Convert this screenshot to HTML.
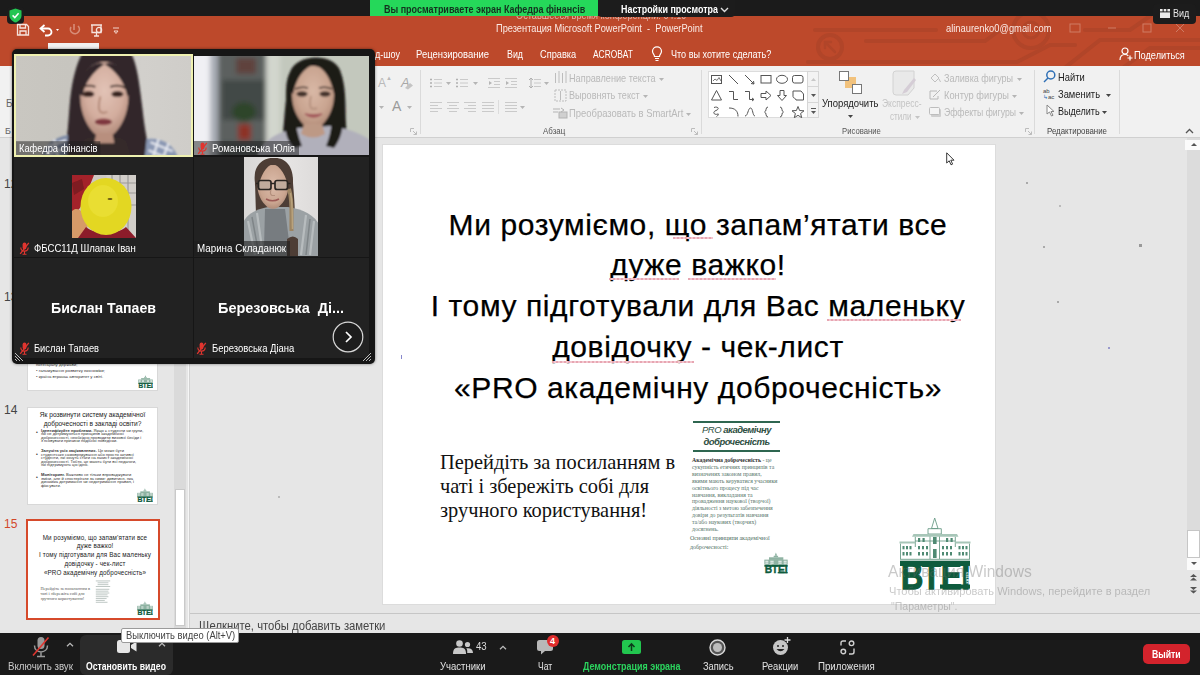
<!DOCTYPE html>
<html lang="ru">
<head>
<meta charset="utf-8">
<title>Zoom</title>
<style>
html,body{margin:0;padding:0;}
body{width:1200px;height:675px;overflow:hidden;position:relative;background:#e6e6e6;font-family:"Liberation Sans",sans-serif;}
.abs{position:absolute;}
.t{position:absolute;white-space:nowrap;line-height:1;}
#topbar{left:0;top:0;width:1200px;height:16px;background:#1b1b1b;}
#orange{left:0;top:16px;width:1200px;height:50px;background:#bd492b;}
#ribbon{left:0;top:66px;width:1200px;height:71px;background:#f1f1f1;border-bottom:1px solid #d0d0d0;}
#work{left:0;top:138px;width:1200px;height:472px;background:#e6e6e6;}
#slide{left:383px;top:145px;width:612px;height:459px;background:#fff;box-shadow:0 0 0 1px #dcdcdc;}
#bottombar{left:0;top:633px;width:1200px;height:42px;background:#1a1a1a;}
#notes{left:0;top:613px;width:1200px;height:20px;background:#e6e6e6;border-top:1px solid #c6c6c6;}
#gallery{left:11.500px;top:48.500px;width:363px;height:315.500px;background:#161616;border-radius:5px;box-shadow:0 0 3px rgba(0,0,0,.5);}
.st{position:absolute;left:9px;width:612px;text-align:center;font-size:30px;letter-spacing:.6px;color:#000;-webkit-text-stroke:.25px #000;white-space:nowrap;line-height:1;}
.sq{position:absolute;height:2px;background:repeating-linear-gradient(90deg,#e7a6b2 0 2px,#f3c6cf 2px 4px);}
</style>
</head>
<body>

<!-- top zoom bar -->
<div id="topbar" class="abs"></div>
<div id="orange" class="abs">
  <svg class="abs" style="left:780px;top:0" width="420" height="50" viewBox="780 16 420 50" fill="none" stroke="#b14529" stroke-width="4" stroke-linecap="round">
    <circle cx="830" cy="47" r="12"/><path d="M835 52 L825 42 M825 48 V42 H831" stroke-width="2.500"/>
    <circle cx="1031" cy="30" r="18"/><circle cx="1031" cy="30" r="8" stroke-width="3"/>
    <path d="M815 30 H936"/><path d="M866 41 H985 L1000 30"/><path d="M808 62 H1017 L1050 45 H1075"/><path d="M1062 70 L1100 40 H1200"/><path d="M1120 70 L1150 48 H1200"/><path d="M1085 30 H1130 L1150 16"/>
  </svg>
</div>
<div class="t" id="t4" style="left:515.5px;top:11px;font-size:10px;color:#e3b3a6;transform-origin:0 50%;transform:scaleX(0.919)">Оставшееся время конференции: 04:19</div>
<div class="abs" style="left:370px;top:0;width:228px;height:16px;background:#25d85a;"></div>
<div class="t" id="t1" style="left:383.8px;top:4px;font-size:10.5px;font-weight:bold;color:#14311f;transform-origin:0 50%;transform:scaleX(0.856)">Вы просматриваете экран Кафедра фінансів</div>
<div class="abs" style="left:598px;top:0;width:137px;height:17px;background:#1c1c1c;border-radius:0 0 4px 4px;"></div>
<div class="t" id="t2" style="left:621.0px;top:4px;font-size:10.5px;font-weight:bold;color:#fff;transform-origin:0 50%;transform:scaleX(0.848)">Настройки просмотра</div>
<svg class="abs" style="left:720px;top:7px" width="9" height="6" viewBox="0 0 9 6"><path d="M1 1 L4.5 4.5 L8 1" fill="none" stroke="#ddd" stroke-width="1.4"/></svg>
<div class="abs" style="left:1153px;top:4px;width:43px;height:20px;background:#1c1c1c;border-radius:4px;"></div>
<svg class="abs" style="left:1160px;top:9px" width="10" height="9" viewBox="0 0 10 9" fill="#e8e8e8"><rect x="0" y="0" width="2.6" height="2.4"/><rect x="3.7" y="0" width="2.6" height="2.4"/><rect x="7.4" y="0" width="2.6" height="2.4"/><rect x="0" y="3.4" width="10" height="5.6"/></svg>
<div class="t" id="t3" style="left:1172.5px;top:8px;font-size:11px;color:#e8e8e8;transform-origin:0 50%;transform:scaleX(0.816)">Вид</div>
<div class="abs" style="left:7px;top:7px;width:17px;height:17px;background:#1c1c1c;border-radius:4px;"></div>
<svg class="abs" style="left:9px;top:8px" width="13" height="15" viewBox="0 0 13 15"><path d="M6.5 .5 L12.5 2.6 V7.5 C12.5 11 9.5 13.6 6.5 14.6 C3.500 13.6 .5 11 .5 7.5 V2.6 Z" fill="#23c552"/><path d="M3.6 7.4 L5.8 9.6 L9.6 5.2" fill="none" stroke="#fff" stroke-width="1.5"/></svg>

<!-- quick access -->
<svg class="abs" style="left:16px;top:23px" width="110" height="14" viewBox="0 0 110 14" fill="none" stroke="#fff" stroke-width="1.3">
  <path d="M1.500 1.500 H10.500 L12.500 3.500 V12 H1.500 Z M4 1.500 V5 H9.500 V1.500 M4 12 V8 H10 V12" stroke="#f6e4de"/>
  <path d="M25 5.500 H32 A3.500 3.500 0 0 1 32 12.500 H29" stroke-width="1.800"/><path d="M28.500 2 L24.500 5.500 L28.500 9" stroke-width="1.800"/>
  <path d="M40 6 h3 l-1.500 2 z" fill="#fff" stroke="none"/>
  <path d="M62 3 A4.500 4.500 0 1 1 55 4 M58 1 V7" stroke="#d78d78" stroke-width="1.600"/>
  <path d="M75 2 H86 M76 2.500 V9.500 H85 V2.500 M80.500 9.500 V12.500 M78 13 H83" stroke="#f6e4de"/><circle cx="83" cy="7" r="2.600" stroke="#f6e4de"/>
  <path d="M97 5 H103 M98 8 h4 l-2 2.500 z" stroke="#f3d5cb" stroke-width="1"/>
</svg>
<div class="abs" style="left:48px;top:43px;width:51px;height:8px;background:#f1f1f1;"></div>

<!-- title -->
<div class="t" id="t5" style="left:496.0px;top:23px;font-size:10.5px;color:#fbeae5;transform-origin:0 50%;transform:scaleX(0.881)">Презентация Microsoft PowerPoint&nbsp; -&nbsp; PowerPoint</div>
<div class="t" id="t6" style="left:945.5px;top:23px;font-size:10.5px;color:#fbeae5;transform-origin:0 50%;transform:scaleX(0.889)">alinaurenko0@gmail.com</div>
<svg class="abs" style="left:1068px;top:22px" width="120" height="12" viewBox="0 0 120 12" fill="none" stroke="#cf7c65" stroke-width="1"><rect x="2" y="2" width="10" height="8"/><path d="M40 6 H48"/><rect x="75" y="2" width="8" height="8"/><path d="M108 2 l8 8 M116 2 l-8 8"/></svg>

<!-- menu -->
<div class="t" id="m0" style="left:374.5px;top:49px;font-size:10.5px;color:#fff;transform-origin:0 50%;transform:scaleX(0.861)">д-шоу</div>
<div class="t" id="m1" style="left:416.0px;top:49px;font-size:10.5px;color:#fff;transform-origin:0 50%;transform:scaleX(0.900)">Рецензирование</div>
<div class="t" id="m2" style="left:507.0px;top:49px;font-size:10.5px;color:#fff;transform-origin:0 50%;transform:scaleX(0.842)">Вид</div>
<div class="t" id="m3" style="left:539.5px;top:49px;font-size:10.5px;color:#fff;transform-origin:0 50%;transform:scaleX(0.880)">Справка</div>
<div class="t" id="m4" style="left:593.0px;top:49px;font-size:10.5px;color:#fff;transform-origin:0 50%;transform:scaleX(0.800)">ACROBAT</div>
<svg class="abs" style="left:651px;top:46px" width="12" height="16" viewBox="0 0 12 16" fill="none" stroke="#fff" stroke-width="1.200"><path d="M3.500 10.500 C3.500 8.500 1.500 7.800 1.500 5.300 A4.500 4.500 0 0 1 10.500 5.300 C10.500 7.800 8.500 8.500 8.500 10.500 Z M4 12.500 H8 M4.500 14.500 H7.500"/></svg>
<div class="t" id="m5" style="left:670.8px;top:49px;font-size:10.5px;color:#fff;transform-origin:0 50%;transform:scaleX(0.864)">Что вы хотите сделать?</div>
<svg class="abs" style="left:1119px;top:47px" width="14" height="14" viewBox="0 0 14 14" fill="none" stroke="#fff" stroke-width="1.200"><circle cx="6" cy="4" r="3"/><path d="M1 13 C1 9 3.500 7.500 6 7.500 C7.500 7.500 8.500 8 9.300 8.800 M11 8.500 V13.500 M8.500 11 H13.500"/></svg>
<div class="t" id="m6" style="left:1133.8px;top:50px;font-size:10.5px;color:#fff;transform-origin:0 50%;transform:scaleX(0.875)">Поделиться</div>
<!-- ribbon -->
<div id="ribbon" class="abs"></div>
<div class="t" style="left:378px;top:77px;font-size:12px;color:#b9b9b9">A</div><div class="t" style="left:386px;top:75px;font-size:6px;color:#b9b9b9">▲</div>
<div class="t" style="left:401px;top:76px;font-size:13px;color:#a8a8a8;font-style:italic">A</div><svg class="abs" style="left:404px;top:82px" width="10" height="8" viewBox="0 0 10 8"><path d="M1 6 L6 1 L9 3.500 L4 7.500 Z" fill="#c4c4c4"/></svg>
<div class="t" style="left:392px;top:99px;font-size:14px;color:#9a9a9a">A</div>
<svg class="abs" style="left:378.5px;top:105.5px" width="5" height="3" viewBox="0 0 5 3"><path d="M0 0 H5 L2.500 3 Z" fill="#b5b5b5"/></svg>
<svg class="abs" style="left:406.5px;top:105.5px" width="5" height="3" viewBox="0 0 5 3"><path d="M0 0 H5 L2.500 3 Z" fill="#b5b5b5"/></svg>
<div class="abs" style="left:420px;top:70px;width:1px;height:64px;background:#dadada"></div>
<svg class="abs" style="left:410px;top:128px" width="7" height="7" viewBox="0 0 7 7" fill="none" stroke="#bcbcbc" stroke-width="1"><path d="M.5 4 V.5 H4 M3 3 L6.500 6.500 M6.500 3.500 V6.500 H3.500"/></svg>
<svg class="abs" style="left:430px;top:78px" width="12" height="10" viewBox="0 0 12 10" stroke="#cacaca" stroke-width="1" fill="none"><path d="M4 1.500 H12 M4 5 H12 M4 8.500 H12"/><path d="M0 1.500 H2 M0 5 H2 M0 8.500 H2" stroke="#b0b0b0" stroke-width="1.600"/></svg>
<svg class="abs" style="left:445.5px;top:81.5px" width="5" height="3" viewBox="0 0 5 3"><path d="M0 0 H5 L2.500 3 Z" fill="#b5b5b5"/></svg>
<svg class="abs" style="left:456px;top:78px" width="12" height="10" viewBox="0 0 12 10" stroke="#cacaca" stroke-width="1" fill="none"><path d="M4 1.500 H12 M4 5 H12 M4 8.500 H12"/><path d="M0 1.500 H2 M0 5 H2 M0 8.500 H2" stroke="#b0b0b0" stroke-width="1.600"/></svg>
<svg class="abs" style="left:472.5px;top:81.5px" width="5" height="3" viewBox="0 0 5 3"><path d="M0 0 H5 L2.500 3 Z" fill="#b5b5b5"/></svg>
<svg class="abs" style="left:488px;top:78px" width="12" height="10" viewBox="0 0 12 10" stroke="#cacaca" stroke-width="1" fill="none"><path d="M0 .5 H12 M6 3.500 H12 M6 6.500 H12 M0 9.500 H12"/><path d="M4 5 L1 3 V7 Z" fill="#b5b5b5" stroke="none"/></svg>
<svg class="abs" style="left:505px;top:78px" width="12" height="10" viewBox="0 0 12 10" stroke="#cacaca" stroke-width="1" fill="none"><path d="M0 .5 H12 M6 3.500 H12 M6 6.500 H12 M0 9.500 H12"/><path d="M4 5 L1 3 V7 Z" fill="#b5b5b5" stroke="none"/></svg>
<svg class="abs" style="left:529px;top:78px" width="12" height="10" viewBox="0 0 12 10" stroke="#cacaca" stroke-width="1" fill="none"><path d="M5 1.500 H12 M5 5 H12 M5 8.500 H12"/><path d="M2 0 V10 M0 2 L2 0 L4 2 M0 8 L2 10 L4 8" stroke="#b0b0b0"/></svg>
<svg class="abs" style="left:543.5px;top:81.5px" width="5" height="3" viewBox="0 0 5 3"><path d="M0 0 H5 L2.500 3 Z" fill="#b5b5b5"/></svg>
<svg class="abs" style="left:430px;top:102px" width="12" height="10" viewBox="0 0 12 10" stroke="#cacaca" stroke-width="1" fill="none"><path d="M0 .5 H12 M0 3.500 H8 M0 6.500 H12 M0 9.500 H8"/></svg>
<svg class="abs" style="left:447px;top:102px" width="12" height="10" viewBox="0 0 12 10" stroke="#cacaca" stroke-width="1" fill="none"><path d="M0 .5 H12 M2 3.500 H10 M0 6.500 H12 M2 9.500 H10"/></svg>
<svg class="abs" style="left:464px;top:102px" width="12" height="10" viewBox="0 0 12 10" stroke="#cacaca" stroke-width="1" fill="none"><path d="M0 .5 H12 M4 3.500 H12 M0 6.500 H12 M4 9.500 H12"/></svg>
<svg class="abs" style="left:482px;top:102px" width="12" height="10" viewBox="0 0 12 10" stroke="#cacaca" stroke-width="1" fill="none"><path d="M0 .5 H12 M0 3.500 H12 M0 6.500 H12 M0 9.500 H12"/></svg>
<div class="abs" style="left:498px;top:100px;width:1px;height:14px;background:#dcdcdc"></div>
<svg class="abs" style="left:505px;top:102px" width="12" height="10" viewBox="0 0 12 10" stroke="#cacaca" stroke-width="1" fill="none"><path d="M0 .5 H12 M0 3.500 H12 M0 6.500 H12 M0 9.500 H12"/></svg>
<svg class="abs" style="left:519.5px;top:105.5px" width="5" height="3" viewBox="0 0 5 3"><path d="M0 0 H5 L2.500 3 Z" fill="#b5b5b5"/></svg>
<svg class="abs" style="left:554px;top:71px" width="13" height="13" viewBox="0 0 13 13" fill="none" stroke="#bdbdbd" stroke-width="1"><path d="M1.500 2 V12 M5 0 V12 M8.500 2 V12 M12 0 V12"/></svg>
<svg class="abs" style="left:554px;top:89px" width="13" height="13" viewBox="0 0 13 13" fill="none" stroke="#bdbdbd" stroke-width="1" stroke-dasharray="2 1"><rect x="1" y="1" width="11" height="11"/><path d="M6.500 2 V11" stroke-dasharray="none"/></svg>
<svg class="abs" style="left:553px;top:107px" width="15" height="12" viewBox="0 0 15 12" fill="none" stroke="#b3b3b3" stroke-width="1"><path d="M0 2 H7 M0 5 H5"/><rect x="6" y="5" width="8" height="6" fill="#d0d0d0"/><path d="M8 1 L11 3 L8 5" /></svg>
<div class="t" id="r1" style="left:569.0px;top:73px;font-size:10.5px;color:#b9b9b9;transform-origin:0 50%;transform:scaleX(0.871)">Направление текста</div><svg class="abs" style="left:658.5px;top:77.5px" width="5" height="3" viewBox="0 0 5 3"><path d="M0 0 H5 L2.500 3 Z" fill="#b5b5b5"/></svg>
<div class="t" id="r2" style="left:569.0px;top:90px;font-size:10.5px;color:#b9b9b9;transform-origin:0 50%;transform:scaleX(0.864)">Выровнять текст</div><svg class="abs" style="left:642.5px;top:94.5px" width="5" height="3" viewBox="0 0 5 3"><path d="M0 0 H5 L2.500 3 Z" fill="#b5b5b5"/></svg>
<div class="t" id="r3" style="left:569.0px;top:108px;font-size:10.5px;color:#b9b9b9;transform-origin:0 50%;transform:scaleX(0.898)">Преобразовать в SmartArt</div><svg class="abs" style="left:685.5px;top:112.5px" width="5" height="3" viewBox="0 0 5 3"><path d="M0 0 H5 L2.500 3 Z" fill="#b5b5b5"/></svg>
<div class="t" id="r4" style="left:542.6px;top:126px;font-size:9.500px;color:#555;transform-origin:0 50%;transform:scaleX(0.833)">Абзац</div>
<svg class="abs" style="left:691px;top:128px" width="7" height="7" viewBox="0 0 7 7" fill="none" stroke="#bcbcbc" stroke-width="1"><path d="M.5 4 V.5 H4 M3 3 L6.500 6.500 M6.500 3.500 V6.500 H3.500"/></svg>
<div class="abs" style="left:701px;top:70px;width:1px;height:64px;background:#dadada"></div>
<div class="abs" style="left:708px;top:71px;width:111px;height:47px;background:#fff;border:1px solid #dcdcdc;box-sizing:border-box"></div>
<div class="abs" style="left:807px;top:71px;width:12px;height:47px;background:#f3f3f3;border:1px solid #d6d6d6;box-sizing:border-box"></div><div class="abs" style="left:807px;top:86px;width:12px;height:1px;background:#d6d6d6"></div><div class="abs" style="left:807px;top:102px;width:12px;height:1px;background:#d6d6d6"></div>
<svg class="abs" style="left:810.5px;top:77.5px" width="5" height="3" viewBox="0 0 5 3"><path d="M0 3 H5 L2.500 0 Z" fill="#c8c8c8"/></svg>
<svg class="abs" style="left:810.5px;top:93.5px" width="5" height="3" viewBox="0 0 5 3"><path d="M0 0 H5 L2.500 3 Z" fill="#555"/></svg>
<svg class="abs" style="left:810.5px;top:110.5px" width="5" height="3" viewBox="0 0 5 3"><path d="M0 0 H5 L2.500 3 Z" fill="#555"/></svg>
<div class="abs" style="left:811px;top:108px;width:5px;height:1px;background:#555"></div>
<svg class="abs" style="left:708px;top:71px" width="100" height="47" viewBox="708 71 100 47" fill="none" stroke="#555" stroke-width="1"><rect x="711.500" y="75.500" width="10" height="8"/><path d="M713 81 l2-2 l2 1.500 l2-3 l2 3.500" stroke-width=".8"/><path d="M729 75 L738 84"/><path d="M745 75 L754 84 M754 84 l-3-.5 M754 84 l-.5-3"/><rect x="761" y="75.500" width="10" height="7.500"/><ellipse cx="782" cy="79.300" rx="5.500" ry="4"/><rect x="792.500" y="75.500" width="10.500" height="7.500" rx="2"/><path d="M716.500 90.500 L721.500 100 H711.500 Z"/><path d="M729 91.500 H733.500 V99.500 H738"/><path d="M745 91.500 H749.500 V99.500 H754 M754 99.500 l-2-1.500 M754 99.500 l-2 1.500"/><path d="M761 93.500 H766 V91 L771 95.500 L766 100 V97.500 H761 Z"/><path d="M780 90.500 H784 V95.500 H786.500 L782 100.500 L777.500 95.500 H780 Z"/><path d="M793 91 H801 L803.500 94 V100 H796 C796 98 793 98.500 793 96.500 Z"/><path d="M714 107.500 C718 106 720 109 716 110.500 C712 112 714 115.500 718 114 C719 113.500 718 116 716.500 116.500"/><path d="M729 108 C735 108 738 111 738 116.500"/><path d="M745 116 C748 116 748 108 750.500 108 C753 108 752.500 116 755 116"/><path d="M768 107 C765 107 767 111.500 764.500 112 C767 112.500 765 117 768 117"/><path d="M780 107 C783 107 781 111.500 783.500 112 C781 112.500 783 117 780 117"/><path d="M798 106.500 L799.600 110.500 L804 110.800 L800.600 113.500 L801.700 117.700 L798 115.300 L794.300 117.700 L795.400 113.500 L792 110.800 L796.400 110.500 Z"/></svg>
<svg class="abs" style="left:839px;top:71px" width="24" height="24" viewBox="0 0 24 24"><rect x="6" y="6" width="11" height="11" fill="#f2c27c"/><rect x=".5" y=".5" width="9" height="9" fill="#fff" stroke="#777"/><rect x="13.500" y="13.500" width="9" height="9" fill="#fff" stroke="#777"/></svg>
<div class="t" id="r5" style="left:822.0px;top:98px;font-size:10.5px;color:#222;transform-origin:0 50%;transform:scaleX(0.903)">Упорядочить</div><svg class="abs" style="left:847.5px;top:114.5px" width="5" height="3" viewBox="0 0 5 3"><path d="M0 0 H5 L2.500 3 Z" fill="#444"/></svg>
<svg class="abs" style="left:892px;top:70px" width="26" height="26" viewBox="0 0 26 26"><path d="M4 1 H22 V18 L16 25 H4 Q1 25 1 22 V4 Q1 1 4 1 Z" fill="#e9e9e9" stroke="#d2d2d2"/><path d="M22 8 L12 20 L10 24 L15 22 L24 10 Z" fill="#d5cdd6"/></svg>
<div class="t" id="r6" style="left:882.0px;top:98px;font-size:10.5px;color:#c4c4c4;transform-origin:0 50%;transform:scaleX(0.810)">Экспресс-</div><div class="t" id="r7" style="left:889.5px;top:111px;font-size:10.5px;color:#c4c4c4;transform-origin:0 50%;transform:scaleX(0.770)">стили</div><svg class="abs" style="left:914.5px;top:115.5px" width="5" height="3" viewBox="0 0 5 3"><path d="M0 0 H5 L2.500 3 Z" fill="#c4c4c4"/></svg>
<svg class="abs" style="left:929px;top:72px" width="12" height="12" viewBox="0 0 12 12" fill="none" stroke="#c0c0c0"><path d="M2 6 L6 2 L10 6 L6 10 Z M10 7 l1.500 3"/></svg><svg class="abs" style="left:929px;top:89px" width="12" height="12" viewBox="0 0 12 12" fill="none" stroke="#b8b8b8"><path d="M1 2 H8 M1 2 V10 H9 V7 M4 8 L11 1"/></svg><svg class="abs" style="left:929px;top:106px" width="13" height="12" viewBox="0 0 13 12"><rect x="2" y="3" width="10" height="8" rx="1" fill="#cfcfcf"/><rect x=".5" y="1.500" width="10" height="7" rx="1" fill="#f4f4f4" stroke="#bdbdbd"/></svg>
<div class="t" id="r8" style="left:944.3px;top:73px;font-size:10.5px;color:#b9b9b9;transform-origin:0 50%;transform:scaleX(0.862)">Заливка фигуры</div><svg class="abs" style="left:1016.5px;top:77.5px" width="5" height="3" viewBox="0 0 5 3"><path d="M0 0 H5 L2.500 3 Z" fill="#b5b5b5"/></svg>
<div class="t" id="r9" style="left:944.0px;top:90px;font-size:10.5px;color:#b9b9b9;transform-origin:0 50%;transform:scaleX(0.885)">Контур фигуры</div><svg class="abs" style="left:1011.5px;top:94.5px" width="5" height="3" viewBox="0 0 5 3"><path d="M0 0 H5 L2.500 3 Z" fill="#b5b5b5"/></svg>
<div class="t" id="r10" style="left:944.0px;top:107px;font-size:10.5px;color:#b9b9b9;transform-origin:0 50%;transform:scaleX(0.823)">Эффекты фигуры</div><svg class="abs" style="left:1018.5px;top:111.5px" width="5" height="3" viewBox="0 0 5 3"><path d="M0 0 H5 L2.500 3 Z" fill="#b5b5b5"/></svg>
<div class="t" id="r11" style="left:842.0px;top:126px;font-size:9.500px;color:#555;transform-origin:0 50%;transform:scaleX(0.811)">Рисование</div>
<svg class="abs" style="left:1025px;top:128px" width="7" height="7" viewBox="0 0 7 7" fill="none" stroke="#bcbcbc" stroke-width="1"><path d="M.5 4 V.5 H4 M3 3 L6.500 6.500 M6.500 3.500 V6.500 H3.500"/></svg>
<div class="abs" style="left:1034px;top:70px;width:1px;height:64px;background:#dadada"></div>
<svg class="abs" style="left:1043px;top:70px" width="13" height="13" viewBox="0 0 13 13" fill="none" stroke="#2e6fb5" stroke-width="1.500"><circle cx="7.800" cy="5" r="4"/><path d="M5 8 L1 12"/></svg>
<div class="t" id="r12" style="left:1058.0px;top:72px;font-size:11px;color:#222;transform-origin:0 50%;transform:scaleX(0.851)">Найти</div>
<div class="t" style="left:1043px;top:88px;font-size:6px;color:#444;line-height:6px">ab<br><span style="color:#2e6fb5">↳</span>ac</div>
<div class="t" id="r13" style="left:1058.0px;top:89px;font-size:11px;color:#222;transform-origin:0 50%;transform:scaleX(0.850)">Заменить</div><svg class="abs" style="left:1105.5px;top:93.5px" width="5" height="3" viewBox="0 0 5 3"><path d="M0 0 H5 L2.500 3 Z" fill="#444"/></svg>
<svg class="abs" style="left:1046px;top:104px" width="9" height="13" viewBox="0 0 9 13" fill="#fff" stroke="#888" stroke-width="1"><path d="M1 1 V10 L3.500 8 L5.500 12 L7 11.300 L5 7.500 H8 Z"/></svg>
<div class="t" id="r14" style="left:1058.0px;top:106px;font-size:11px;color:#222;transform-origin:0 50%;transform:scaleX(0.822)">Выделить</div><svg class="abs" style="left:1101.5px;top:110.5px" width="5" height="3" viewBox="0 0 5 3"><path d="M0 0 H5 L2.500 3 Z" fill="#444"/></svg>
<div class="t" id="r15" style="left:1046.7px;top:126px;font-size:9.500px;color:#444;transform-origin:0 50%;transform:scaleX(0.829)">Редактирование</div>
<div class="abs" style="left:1119px;top:70px;width:1px;height:64px;background:#dadada"></div>
<svg class="abs" style="left:1185px;top:128px" width="9" height="6" viewBox="0 0 9 6"><path d="M1 5 L4.500 1.500 L8 5" fill="none" stroke="#555" stroke-width="1.300"/></svg>
<div id="work" class="abs"></div>
<div id="notes" class="abs"></div>
<div class="t" style="left:6px;top:99px;font-size:10px;color:#666">Б</div><div class="t" style="left:5px;top:127px;font-size:9px;color:#666">Б</div>
<!-- left thumbnails panel -->
<div class="abs" style="left:0;top:138px;width:189px;height:495px;background:#e6e6e6"></div>
<div class="abs" style="left:174px;top:138px;width:12px;height:495px;background:#dadada"></div>
<div class="abs" style="left:175px;top:489px;width:10px;height:137px;background:#fff;border:1px solid #c9c9c9;box-sizing:border-box"></div>
<div class="abs" style="left:188px;top:138px;width:1px;height:495px;background:#f6f6f6"></div>
<div class="abs" style="left:189px;top:138px;width:1px;height:495px;background:#d2d2d2"></div>
<div class="t" style="left:4px;top:178px;font-size:12px;color:#444">12</div>
<div class="t" style="left:4px;top:291px;font-size:12px;color:#444">13</div>
<!-- thumb 13 (partly hidden) -->
<div class="abs" style="left:27px;top:300px;width:131px;height:91px;background:#fff;border:1px solid #d8d8d8;box-sizing:border-box"></div>
<div class="t" style="left:36px;top:362px;font-size:4.300px;color:#333;line-height:6px">потенціалу держави;<br>• гальмування розвитку економіки;<br>• країна втрачає авторитет у світі.</div>
<svg class="abs" style="left:138px;top:375px" width="15" height="13" viewBox="899 516 72 75" preserveAspectRatio="none"><g fill="#8fb3a3"><path d="M934.700 518 L931 529 H938.500 Z"/><rect x="928" y="529" width="13.300" height="5"/><rect x="914" y="534" width="43" height="9"/><rect x="900" y="542" width="70" height="17.500"/></g><g fill="#fff"><rect x="903" y="546" width="9" height="3"/><rect x="918" y="546" width="10" height="3"/><rect x="942" y="546" width="10" height="3"/><rect x="958" y="546" width="9" height="3"/><rect x="903" y="552" width="9" height="3.500"/><rect x="918" y="552" width="10" height="3.500"/><rect x="942" y="552" width="10" height="3.500"/><rect x="958" y="552" width="9" height="3.500"/></g><rect x="900" y="560.700" width="70" height="5.300" fill="#0e5b3d"/><rect x="940" y="584.500" width="30" height="4.200" fill="#0e5b3d"/><text x="901" y="588.700" font-family="Liberation Sans, sans-serif" font-weight="bold" font-size="39" textLength="69" lengthAdjust="spacingAndGlyphs" fill="#0e5b3d" stroke="#0e5b3d" stroke-width="1.300">ВТЕІ</text></svg>
<!-- thumb 14 -->
<div class="t" id="n14" style="left:4px;top:404px;font-size:12px;color:#444">14</div>
<div class="abs" style="left:27px;top:407px;width:131px;height:98px;background:#fff;border:1px solid #d8d8d8;box-sizing:border-box"></div>
<div class="abs" style="left:27px;top:411px;width:131px;text-align:center;font-size:6.600px;line-height:8.600px;color:#222;white-space:nowrap">Як розвинути систему академічної<br>доброчесності в закладі освіти?</div>
<div class="abs" style="left:41px;top:429px;width:112px;font-size:4.100px;line-height:3.400px;color:#333;white-space:nowrap"><b>Ідентифікуйте проблеми.</b> Якщо є студенти чи групи,<br>які не дотримуються принципів академічної<br>доброчесності, необхідно проводити виховні бесіди і<br>з’ясовувати причини подібної поведінки.<br><br><br><b>Залучіть усіх зацікавлених.</b> Це може бути<br>студентське самоврядування або просто активні<br>студенти, які хочуть стати на захист академічної<br>доброчесності. Тобто, це мають бути всі педагоги,<br>які підтримують цю ідею.<br><br><br><b>Моніторинг.</b> Важливо не тільки впроваджувати<br>зміни, але й спостерігати за ними: дивитися, яка<br>динаміка дотримання чи недотримання правил, і<br>фіксувати.</div>
<div class="t" style="left:36px;top:421px;font-size:5px;color:#333;line-height:22.300px">•<br>•<br>•</div>
<svg class="abs" style="left:137px;top:488px" width="16" height="14" viewBox="899 516 72 75" preserveAspectRatio="none"><g fill="#8fb3a3"><path d="M934.700 518 L931 529 H938.500 Z"/><rect x="928" y="529" width="13.300" height="5"/><rect x="914" y="534" width="43" height="9"/><rect x="900" y="542" width="70" height="17.500"/></g><g fill="#fff"><rect x="903" y="546" width="9" height="3"/><rect x="918" y="546" width="10" height="3"/><rect x="942" y="546" width="10" height="3"/><rect x="958" y="546" width="9" height="3"/><rect x="903" y="552" width="9" height="3.500"/><rect x="918" y="552" width="10" height="3.500"/><rect x="942" y="552" width="10" height="3.500"/><rect x="958" y="552" width="9" height="3.500"/></g><rect x="900" y="560.700" width="70" height="5.300" fill="#0e5b3d"/><rect x="940" y="584.500" width="30" height="4.200" fill="#0e5b3d"/><text x="901" y="588.700" font-family="Liberation Sans, sans-serif" font-weight="bold" font-size="39" textLength="69" lengthAdjust="spacingAndGlyphs" fill="#0e5b3d" stroke="#0e5b3d" stroke-width="1.300">ВТЕІ</text></svg>
<!-- thumb 15 selected -->
<div class="t" id="n15" style="left:4px;top:518px;font-size:12px;color:#d2472a">15</div>
<div class="abs" style="left:26px;top:519px;width:134px;height:101px;background:#fff;border:2px solid #d64a2b;box-sizing:border-box"></div>
<div class="abs" style="left:30px;top:533.500px;width:130px;text-align:center;font-size:6.300px;letter-spacing:.12px;line-height:8.750px;color:#222;white-space:nowrap">Ми розуміємо, що запам’ятати все<br>дуже важко!<br>І тому підготували для Вас маленьку<br>довідочку - чек-лист<br>«PRO академічну доброчесність»</div>
<div class="abs" style="left:40.500px;top:585.500px;font-family:'Liberation Serif',serif;font-size:4.300px;line-height:5.100px;color:#555;white-space:nowrap">Перейдіть за посиланням в<br>чаті і збережіть собі для<br>зручного користування!</div>
<svg class="abs" style="left:94px;top:580px" width="18" height="26" viewBox="0 0 20 28" preserveAspectRatio="none" stroke="#8a9a94" stroke-width=".6" fill="none"><path d="M2 1 H18 M4 3 H16 M4 5 H16 M2 7 H18 M2 10 H17 M2 12 H16 M2 14 H17 M2 16 H15 M2 18 H16 M2 20 H14 M2 22 H12 M2 24 H15"/></svg>
<svg class="abs" style="left:137px;top:601px" width="16" height="14" viewBox="899 516 72 75" preserveAspectRatio="none"><g fill="#8fb3a3"><path d="M934.700 518 L931 529 H938.500 Z"/><rect x="928" y="529" width="13.300" height="5"/><rect x="914" y="534" width="43" height="9"/><rect x="900" y="542" width="70" height="17.500"/></g><g fill="#fff"><rect x="903" y="546" width="9" height="3"/><rect x="918" y="546" width="10" height="3"/><rect x="942" y="546" width="10" height="3"/><rect x="958" y="546" width="9" height="3"/><rect x="903" y="552" width="9" height="3.500"/><rect x="918" y="552" width="10" height="3.500"/><rect x="942" y="552" width="10" height="3.500"/><rect x="958" y="552" width="9" height="3.500"/></g><rect x="900" y="560.700" width="70" height="5.300" fill="#0e5b3d"/><rect x="940" y="584.500" width="30" height="4.200" fill="#0e5b3d"/><text x="901" y="588.700" font-family="Liberation Sans, sans-serif" font-weight="bold" font-size="39" textLength="69" lengthAdjust="spacingAndGlyphs" fill="#0e5b3d" stroke="#0e5b3d" stroke-width="1.300">ВТЕІ</text></svg>
<div id="slide" class="abs">
  <div class="st" style="top:64.500px">Ми розуміємо, що запам’ятати все</div>
  <div class="st" style="top:105.300px">дуже важко!</div>
  <div class="st" style="top:146.200px">І тому підготували для Вас маленьку</div>
  <div class="st" style="top:187px">довідочку - чек-лист</div>
  <div class="st" style="top:227.800px">«PRO академічну доброчесність»</div>
  <div class="abs" style="left:57px;top:306px;font-family:'Liberation Serif',serif;font-size:20.400px;line-height:23.900px;color:#111;white-space:nowrap" id="sv">Перейдіть за посиланням в<br>чаті і збережіть собі для<br>зручного користування!</div>
  <!-- doc image -->
  <div class="abs" style="left:310px;top:276px;width:87px;height:1.500px;background:#2e6650"></div>
  <div class="abs" style="left:310px;top:305px;width:87px;height:1.500px;background:#2e6650"></div>
  <div class="abs" style="left:310px;top:279px;width:87px;text-align:center;font-size:9.500px;line-height:12px;font-style:italic;font-weight:bold;color:#2f4f43;white-space:nowrap;letter-spacing:-.5px"><span style="font-weight:normal">PRO</span> академічну<br>доброчесність</div>
  <div class="abs" style="left:309px;top:312px;font-family:'Liberation Serif',serif;font-size:5.800px;line-height:6.900px;color:#56756a;white-space:nowrap"><b style="color:#333">Академічна доброчесність</b> - це<br>сукупність етичних принципів та<br>визначених законом правил,<br>якими мають керуватися учасники<br>освітнього процесу під час<br>навчання, викладання та<br>провадження наукової (творчої)<br>діяльності з метою забезпечення<br>довіри до результатів навчання<br>та/або наукових (творчих)<br>досягнень.</div>
  <div class="abs" style="left:307px;top:389px;font-family:'Liberation Serif',serif;font-size:6px;line-height:8.500px;color:#4f6f62;white-space:nowrap">Основні принципи академічної<br>доброчесності:</div>
  <svg class="abs" style="left:381px;top:407px" width="24" height="22" viewBox="899 516 72 75" preserveAspectRatio="none"><g fill="#8fb3a3"><path d="M934.700 518 L931 529 H938.500 Z"/><rect x="928" y="529" width="13.300" height="5"/><rect x="914" y="534" width="43" height="9"/><rect x="900" y="542" width="70" height="17.500"/></g><g fill="#fff"><rect x="903" y="546" width="9" height="3"/><rect x="918" y="546" width="10" height="3"/><rect x="942" y="546" width="10" height="3"/><rect x="958" y="546" width="9" height="3"/><rect x="903" y="552" width="9" height="3.500"/><rect x="918" y="552" width="10" height="3.500"/><rect x="942" y="552" width="10" height="3.500"/><rect x="958" y="552" width="9" height="3.500"/></g><rect x="900" y="560.700" width="70" height="5.300" fill="#0e5b3d"/><rect x="940" y="584.500" width="30" height="4.200" fill="#0e5b3d"/><text x="901" y="588.700" font-family="Liberation Sans, sans-serif" font-weight="bold" font-size="39" textLength="69" lengthAdjust="spacingAndGlyphs" fill="#0e5b3d" stroke="#0e5b3d" stroke-width="1.300">ВТЕІ</text></svg>
  <svg class="abs" style="left:516px;top:371px" width="72" height="75" viewBox="899 516 72 75"><g fill="none" stroke="#6b9c88" stroke-width=".9"><path d="M934.700 518 L931.500 528.500 H938 Z"/><path d="M928 528.700 H941.300 V534 H928 Z"/><path d="M915.300 536.700 V547 M955.300 536.700 V547 M900.500 543.500 V559 M969.500 543.500 V559 M900 559.300 H970 M915 541 H955"/><path d="M930 534 V559 M939.500 534 V559"/></g><path d="M913.500 534 H957 L958.500 536.800 H912 Z" fill="#a7c6b8"/><path d="M899.500 541.500 H915.300 V543.500 H899.500 Z M955.300 541.500 H970.500 V543.500 H955.300 Z" fill="#a7c6b8"/><g fill="#4f8a73"><rect x="933" y="537" width="3.600" height="7"/><rect x="933" y="549" width="3.600" height="9"/><rect x="918" y="538" width="2.200" height="4"/><rect x="922.5" y="538" width="2.200" height="4"/><rect x="946" y="538" width="2.200" height="4"/><rect x="950.5" y="538" width="2.200" height="4"/><rect x="902.5" y="546" width="2" height="3.3"/><rect x="906" y="546" width="2" height="3.3"/><rect x="909.5" y="546" width="2" height="3.3"/><rect x="918" y="546" width="2" height="3.3"/><rect x="922" y="546" width="2" height="3.3"/><rect x="926" y="546" width="2" height="3.3"/><rect x="942" y="546" width="2" height="3.3"/><rect x="946" y="546" width="2" height="3.3"/><rect x="950" y="546" width="2" height="3.3"/><rect x="958.5" y="546" width="2" height="3.3"/><rect x="962" y="546" width="2" height="3.3"/><rect x="965.5" y="546" width="2" height="3.3"/><rect x="902.5" y="552" width="2" height="3.5"/><rect x="906" y="552" width="2" height="3.5"/><rect x="909.5" y="552" width="2" height="3.5"/><rect x="918" y="552" width="2" height="3.5"/><rect x="922" y="552" width="2" height="3.5"/><rect x="926" y="552" width="2" height="3.5"/><rect x="942" y="552" width="2" height="3.5"/><rect x="946" y="552" width="2" height="3.5"/><rect x="950" y="552" width="2" height="3.5"/><rect x="958.5" y="552" width="2" height="3.5"/><rect x="962" y="552" width="2" height="3.5"/><rect x="965.5" y="552" width="2" height="3.5"/></g><rect x="900" y="560.700" width="70" height="5.300" fill="#0e5b3d"/><rect x="940" y="584.500" width="30" height="4.200" fill="#0e5b3d"/><text x="901" y="588.700" font-family="Liberation Sans, sans-serif" font-weight="bold" font-size="39" textLength="69" lengthAdjust="spacingAndGlyphs" fill="#0e5b3d" stroke="#0e5b3d" stroke-width="1.300">ВТЕІ</text><text x="968.800" y="583.500" font-family="Liberation Sans, sans-serif" font-size="3.600" font-weight="bold" fill="#fff" transform="rotate(-90 968.800 583.500)">КНТЕУ</text></svg>
  <!-- spell squiggles -->
  <div class="sq" style="left:290px;top:92px;width:40px"></div>
  <div class="sq" style="left:226px;top:133px;width:70px"></div>
  <div class="sq" style="left:305px;top:133px;width:88px"></div>
  <div class="sq" style="left:444px;top:174px;width:134px"></div>
  <div class="sq" style="left:169px;top:216px;width:142px"></div>
</div>
<!-- gallery -->
<!-- right scrollbar -->
<div class="abs" style="left:1187px;top:138px;width:13px;height:475px;background:#dcdcdc"></div>
<div class="abs" style="left:1185px;top:140px;width:15px;height:10px;background:#fbfbfb"></div>
<svg class="abs" style="left:1191px;top:143px" width="6" height="3" viewBox="0 0 6 3"><path d="M0 3 H6 L3 0 Z" fill="#555"/></svg>
<div class="abs" style="left:1187px;top:530px;width:13px;height:28px;background:#fff;border:1px solid #c6c6c6;box-sizing:border-box"></div>
<div class="abs" style="left:1187px;top:558px;width:13px;height:12px;background:#fbfbfb"></div>
<svg class="abs" style="left:1191px;top:562px" width="6" height="3" viewBox="0 0 6 3"><path d="M0 0 H6 L3 3 Z" fill="#555"/></svg>
<div class="abs" style="left:1187px;top:570px;width:13px;height:43px;background:#e6e6e6"></div>
<svg class="abs" style="left:1190px;top:574px" width="7" height="20" viewBox="0 0 7 20" fill="#555"><path d="M0 3 H7 L3.500 0 Z M0 6.500 H7 L3.500 3.500 Z M0 13 H7 L3.500 16 Z M0 16.500 H7 L3.500 19.500 Z"/></svg>
<!-- notes -->
<div class="t" id="nt" style="left:199.3px;top:620px;font-size:12.500px;color:#444;transform-origin:0 50%;transform:scaleX(0.903)">Щелкните, чтобы добавить заметки</div>
<!-- watermark -->
<div class="t" id="w1" style="left:888.0px;top:564px;font-size:16px;color:rgba(105,105,105,.36);transform-origin:0 50%;transform:scaleX(0.975)">Активация Windows</div>
<div class="t" id="w2" style="left:889.3px;top:586px;font-size:11px;color:rgba(105,105,105,.36);transform-origin:0 50%;transform:scaleX(1.006)">Чтобы активировать Windows, перейдите в раздел</div>
<div class="t" id="w3" style="left:890.5px;top:601px;font-size:11px;color:rgba(105,105,105,.36);transform-origin:0 50%;transform:scaleX(0.957)">"Параметры".</div>
<!-- stray dots -->
<div class="abs" style="left:1026px;top:182px;width:2px;height:2px;background:#aaa"></div><div class="abs" style="left:1059px;top:205px;width:2px;height:2px;background:#bbb"></div><div class="abs" style="left:1043px;top:246px;width:2px;height:2px;background:#aaa"></div><div class="abs" style="left:1139px;top:244px;width:3px;height:3px;background:#999"></div><div class="abs" style="left:1057px;top:301px;width:2px;height:2px;background:#aaa"></div><div class="abs" style="left:1108px;top:347px;width:2px;height:2px;background:#99c"></div><div class="abs" style="left:401px;top:355px;width:1px;height:4px;background:#88c"></div><div class="abs" style="left:278px;top:496px;width:2px;height:2px;background:#bbb"></div>
<!-- cursor -->
<svg class="abs" style="left:946px;top:152px" width="9" height="14" viewBox="0 0 9 14"><path d="M.7 .8 V11 L3.200 8.800 L5 12.800 L6.600 12.100 L4.800 8.200 H8 Z" fill="#fff" stroke="#222" stroke-width=".9"/></svg>
<div id="gallery" class="abs"><div class="abs" style="left:.5px;top:1.500px">
<svg width="0" height="0" style="position:absolute"><defs>
<filter id="f1" x="-10%" y="-10%" width="120%" height="120%"><feGaussianBlur stdDeviation="1.300"/></filter>
<filter id="f2" x="-10%" y="-10%" width="120%" height="120%"><feGaussianBlur stdDeviation="2.500"/></filter>
<filter id="f3" x="-10%" y="-10%" width="120%" height="120%"><feGaussianBlur stdDeviation=".7"/></filter>
</defs></svg>
<!-- tile1 -->
<div class="abs" style="left:2px;top:4px;width:179.300px;height:103px;background:#eff1b0;"></div>
<svg class="abs" style="left:3.800px;top:5.800px" width="175.700" height="99.400" viewBox="0 0 175 98" preserveAspectRatio="none">
<defs><clipPath id="c1"><rect width="175" height="98"/></clipPath><linearGradient id="bg1" x1="0" x2="1"><stop offset="0" stop-color="#c9c7c1"/><stop offset=".3" stop-color="#c7c5bf"/><stop offset=".72" stop-color="#d2d0cc"/><stop offset="1" stop-color="#cfcdc9"/></linearGradient>
<radialGradient id="sk1" cx=".5" cy=".38" r=".65"><stop offset="0" stop-color="#e2c3b6"/><stop offset=".6" stop-color="#d3ad9e"/><stop offset="1" stop-color="#ad8676"/></radialGradient></defs>
<g clip-path="url(#c1)"><rect width="175" height="98" fill="url(#bg1)"/>
<g filter="url(#f1)">
<path d="M66 -3 C78 -6 104 -6 115 -2 C121 10 123 28 126 52 C128 70 130 84 136 104 H46 C52 84 52 62 54 42 C56 24 60 8 66 -3 Z" fill="#30262a"/>
<path d="M26 100 C28 88 38 80 52 78 L50 104 Z" fill="#7d8aa6"/><path d="M130 82 C146 80 158 88 162 102 H128 Z" fill="#8a97b3"/>
<path d="M30 90 l20 -7 M30 97 l20 -6 M134 85 l22 9 M132 93 l22 9 M142 82 l-6 20 M152 86 l-6 16 M38 82 l4 18" stroke="#e3e6ee" stroke-width="2.200"/>
<path d="M64 40 C62 16 76 6 88 6 C100 6 114 16 112 40 C112 58 104 72 96 78 C92 81 84 81 80 78 C72 72 64 58 64 40 Z" fill="url(#sk1)"/>
<path d="M62 36 C62 14 80 4 88 8 C80 14 70 22 66 40 Z M114 36 C114 14 98 4 88 8 C98 14 108 24 111 40 Z" fill="#30262a"/>
<path d="M68 82 C76 78 80 80 84 84 H94 C98 80 102 78 110 84 L116 104 H62 Z" fill="#342a2a"/><path d="M80 76 h16 l2 10 h-20 Z" fill="#b88f7e"/>
<ellipse cx="72" cy="37.500" rx="6" ry="3" fill="#3a2823"/><ellipse cx="101" cy="37.500" rx="6" ry="3" fill="#3a2823"/>
<path d="M64 31.500 q8 -4 15 -1 M94 30.500 q8 -3 15 1" stroke="#3a2a26" stroke-width="1.800" fill="none"/>
<path d="M84 40 q-3 12 0 15 q3 2 7 0" stroke="#b08573" stroke-width="1.800" fill="none"/>
<ellipse cx="87" cy="65" rx="8.500" ry="3.400" fill="#8b3f47"/><path d="M79 65 h16" stroke="#5e2a30" stroke-width="1"/>
</g>
<rect x="0" y="84" width="84" height="14" fill="rgba(30,30,30,.5)"/></g></svg>
<div class="t" id="g1" style="left:7.3px;top:93px;font-size:11px;color:#fff;transform-origin:0 50%;transform:scaleX(0.847)">Кафедра фінансів</div>
<!-- tile2 -->
<svg class="abs" style="left:182px;top:6px" width="175" height="99" viewBox="0 0 175 99">
<defs><clipPath id="c2"><rect width="175" height="99"/></clipPath>
<radialGradient id="sk2" cx=".5" cy=".4" r=".65"><stop offset="0" stop-color="#d9b8a6"/><stop offset=".6" stop-color="#c9a490"/><stop offset="1" stop-color="#a98370"/></radialGradient></defs>
<g clip-path="url(#c2)"><rect width="175" height="99" fill="#c3c8bd"/>
<g filter="url(#f2)"><rect x="-5" y="-5" width="24" height="110" fill="#f0f0f4"/><rect x="16" y="-5" width="10" height="110" fill="#a9adb6"/><rect x="24" y="-5" width="48" height="110" fill="#5b605f"/>
<rect x="28" y="24" width="44" height="40" fill="#424846"/><rect x="42" y="2" width="20" height="16" fill="#5e433c"/><ellipse cx="50" cy="56" rx="12" ry="10" fill="#2f4529"/><rect x="44" y="68" width="13" height="16" fill="#8c3027"/><rect x="26" y="86" width="46" height="16" fill="#4a4f50"/><rect x="72" y="-5" width="14" height="110" fill="#d2d6cd"/></g>
<g filter="url(#f1)">
<path d="M96 16 C102 -2 138 -4 146 14 C154 34 150 58 153 78 L150 94 L134 92 L104 92 L86 94 C90 78 90 60 92 44 C92 32 92 24 96 16 Z" fill="#1f1a19"/>
<path d="M62 104 C66 84 84 76 104 72 L136 70 C152 72 170 78 178 86 V104 Z" fill="#b1b0bb"/>
<path d="M98 40 C96 20 108 10 119 10 C130 10 142 20 140 40 C140 54 132 66 126 71 C122 74 116 74 112 71 C106 66 98 54 98 40 Z" fill="url(#sk2)"/><path d="M110 68 h18 l3 10 q-12 7 -24 0 Z" fill="#bd9985"/>
<path d="M96 34 C96 12 112 4 120 8 C110 12 102 22 99 38 Z M142 34 C142 12 128 4 120 8 C130 12 137 22 140 38 Z" fill="#1f1a19"/>
<path d="M92 60 C90 74 92 84 100 92 L108 90 C104 80 102 70 100 58 Z M148 60 C150 74 146 84 140 92 L132 90 C136 80 138 70 138 58 Z" fill="#1f1a19"/>
<ellipse cx="108" cy="38" rx="5.500" ry="2.700" fill="#43302a"/><ellipse cx="131" cy="38" rx="5.500" ry="2.700" fill="#43302a"/>
<path d="M101 33 q7 -3 13 -1 M125 32 q7 -2 13 1" stroke="#3a2c28" stroke-width="1.500" fill="none"/>
<path d="M117 40 q-2 9 0 12 q3 1.500 6 0" stroke="#b18d7a" stroke-width="1.500" fill="none"/>
<path d="M111 58 Q119.500 64 128 58 Q119.500 60 111 58 Z" fill="#a2545a" stroke="#a2545a" stroke-width="1.500"/>
</g>
<rect x="0" y="85" width="105" height="14" fill="rgba(30,30,30,.5)"/></g></svg>
<svg class="abs" style="left:185px;top:92px" width="11" height="13" viewBox="0 0 11 13"><rect x="3.600" y=".5" width="3.800" height="7" rx="1.900" fill="#e0352f"/><path d="M1.800 5.500 C1.800 10.300 9.200 10.300 9.200 5.500 M5.500 9.300 V12 M3.500 12.300 H7.500" fill="none" stroke="#e0352f" stroke-width="1.100"/><path d="M9.800 .8 L1.200 11.800" stroke="#e0352f" stroke-width="1.300"/></svg><div class="t" id="g2" style="left:199.6px;top:93px;font-size:11px;color:#fff;transform-origin:0 50%;transform:scaleX(0.870)">Романовська Юлія</div>
<!-- tile3 -->
<div class="abs" style="left:2px;top:107px;width:179px;height:100px;background:#222"></div>
<svg class="abs" style="left:60px;top:125px" width="64" height="63" viewBox="0 0 64 63">
<defs><clipPath id="c3"><rect width="64" height="63"/></clipPath></defs>
<g clip-path="url(#c3)"><rect width="64" height="63" fill="#cdc8c3"/>
<g filter="url(#f3)"><path d="M34 0 H64 V63 H50 Z" fill="#d2cec9"/><path d="M40 0 V40 M48 0 V50 M56 0 V60 M34 8 H64 M34 18 H64 M40 30 H64" stroke="#9b9a98" stroke-width="1.200"/>
<path d="M0 0 H22 L10 30 L0 44 Z" fill="#a32429"/><path d="M0 8 L10 4 L12 14 L2 20 Z" fill="#7e1a20"/><path d="M0 36 C6 30 14 38 16 50 L12 63 H0 Z" fill="#d69a68"/><path d="M6 63 L14 52 C24 60 44 60 54 52 L64 63 Z" fill="#8c1f2a"/>
<ellipse cx="34" cy="31.500" rx="25.500" ry="28.500" fill="#e3d722"/><ellipse cx="31" cy="26" rx="15" ry="16" fill="#e9de30"/><ellipse cx="38" cy="24" rx="2.500" ry="1" fill="#6b5a14"/></g></g></svg>
<svg class="abs" style="left:7px;top:192px" width="11" height="13" viewBox="0 0 11 13"><rect x="3.600" y=".5" width="3.800" height="7" rx="1.900" fill="#e0352f"/><path d="M1.800 5.500 C1.800 10.300 9.200 10.300 9.200 5.500 M5.500 9.300 V12 M3.500 12.300 H7.500" fill="none" stroke="#e0352f" stroke-width="1.100"/><path d="M9.800 .8 L1.200 11.800" stroke="#e0352f" stroke-width="1.300"/></svg><div class="t" id="g3" style="left:22.0px;top:193px;font-size:11px;color:#fff;transform-origin:0 50%;transform:scaleX(0.871)">ФБСС11Д Шлапак Іван</div>
<!-- tile4 -->
<div class="abs" style="left:182px;top:107px;width:175px;height:100px;background:#222"></div>
<svg class="abs" style="left:232px;top:107px" width="74" height="99" viewBox="0 0 74 99">
<defs><clipPath id="c4"><rect width="74" height="99"/></clipPath>
<radialGradient id="sk4" cx=".5" cy=".45" r=".6"><stop offset="0" stop-color="#dcbcaa"/><stop offset=".7" stop-color="#caa590"/><stop offset="1" stop-color="#a88572"/></radialGradient>
<linearGradient id="bg4" x1="0" x2="1"><stop offset="0" stop-color="#d9d7d6"/><stop offset=".6" stop-color="#e6e4e3"/><stop offset="1" stop-color="#dddbda"/></linearGradient></defs>
<g clip-path="url(#c4)"><rect width="74" height="99" fill="url(#bg4)"/>
<g filter="url(#f3)">
<path d="M11 26 C8 6 22 0 30 1 C40 0 50 8 49 26 C50 40 52 56 50 78 L42 84 L12 58 Z" fill="#4e3e35"/>
<path d="M-2 99 V68 C2 56 14 52 24 50 H44 C58 52 72 58 76 70 V99 Z" fill="#9ba1a4"/>
<path d="M4 64 l7 34 M13 56 l6 42 M62 58 l-5 40 M70 64 l-4 34" stroke="#b7bcbe" stroke-width="2.200"/><path d="M8 60 l7 38 M66 62 l-4 36" stroke="#7f8588" stroke-width="1.500"/>
<path d="M21 52 h20 l5 40 h-26 Z" fill="#777b80"/>
<path d="M13.500 30 C12 16 20 8 29 8 C38 8 46 16 44.500 30 C44 40 38 48 33 51 C31 52 27 52 25 51 C20 48 14 40 13.500 30 Z" fill="url(#sk4)"/>
<path d="M11 28 C10 10 24 4 29 6 C22 10 16 18 14.500 32 Z M49 28 C50 10 36 4 29 6 C36 10 43 18 44 32 Z" fill="#4e3e35"/>
<path d="M45 32 C49 44 47 58 47.500 74" stroke="#9c8462" stroke-width="4" fill="none"/><path d="M46.500 36 C49 48 48 60 48.500 72" stroke="#b9a27c" stroke-width="1.500" fill="none"/>
<rect x="14.500" y="23.500" width="12.500" height="9" rx="2" fill="#c0ab9c" stroke="#2a2624" stroke-width="1.700"/><rect x="31" y="23.500" width="12.500" height="9" rx="2" fill="#c0ab9c" stroke="#2a2624" stroke-width="1.700"/><path d="M27 26.500 h4 M12 26.500 h2.500 M43.500 26.500 h3" stroke="#2a2624" stroke-width="1.400"/>
<path d="M22 42 q6.500 3.500 13 0" stroke="#9c5a56" stroke-width="1.500" fill="none"/><path d="M27 33 q-1.500 4 1 5.500 h3" stroke="#b38f7c" stroke-width="1.200" fill="none"/>
<path d="M43 82 q6 -5 11 0 v17 h-11 Z" fill="#4d3c34"/>
</g></g></svg>
<div class="abs" style="left:182px;top:191px;width:96px;height:15px;background:rgba(30,30,30,.6)"></div>
<div class="t" id="g4" style="left:185.0px;top:193px;font-size:11px;color:#fff;transform-origin:0 50%;transform:scaleX(0.890)">Марина Складанюк</div>
<!-- tile5 -->
<div class="abs" style="left:2px;top:208px;width:179px;height:100px;background:#222"></div>
<div class="t" id="g5b" style="left:39.0px;top:250px;font-size:15px;font-weight:bold;color:#fff;transform-origin:0 50%;transform:scaleX(0.941)">Бислан Тапаев</div>
<svg class="abs" style="left:7px;top:292px" width="11" height="13" viewBox="0 0 11 13"><rect x="3.600" y=".5" width="3.800" height="7" rx="1.900" fill="#e0352f"/><path d="M1.800 5.500 C1.800 10.300 9.200 10.300 9.200 5.500 M5.500 9.300 V12 M3.500 12.300 H7.500" fill="none" stroke="#e0352f" stroke-width="1.100"/><path d="M9.800 .8 L1.200 11.800" stroke="#e0352f" stroke-width="1.300"/></svg><div class="t" id="g5" style="left:21.6px;top:293px;font-size:11px;color:#fff;transform-origin:0 50%;transform:scaleX(0.846)">Бислан Тапаев</div>
<!-- tile6 -->
<div class="abs" style="left:182px;top:208px;width:175px;height:100px;background:#222"></div>
<div class="t" id="g6b" style="left:205.9px;top:250px;font-size:15px;font-weight:bold;color:#fff;transform-origin:0 50%;transform:scaleX(0.964)">Березовська&nbsp; Ді...</div>
<svg class="abs" style="left:184px;top:292px" width="11" height="13" viewBox="0 0 11 13"><rect x="3.600" y=".5" width="3.800" height="7" rx="1.900" fill="#e0352f"/><path d="M1.800 5.500 C1.800 10.300 9.200 10.300 9.200 5.500 M5.500 9.300 V12 M3.500 12.300 H7.500" fill="none" stroke="#e0352f" stroke-width="1.100"/><path d="M9.800 .8 L1.200 11.800" stroke="#e0352f" stroke-width="1.300"/></svg><div class="t" id="g6" style="left:199.6px;top:293px;font-size:11px;color:#fff;transform-origin:0 50%;transform:scaleX(0.859)">Березовська Діана</div>
<svg class="abs" style="left:320px;top:271px" width="32" height="32" viewBox="0 0 32 32"><circle cx="16" cy="16" r="14.800" fill="#1d1d1d" stroke="#d8d8d8" stroke-width="1.200"/><path d="M14 11 L19 16 L14 21" fill="none" stroke="#fff" stroke-width="1.700"/></svg>
<svg class="abs" style="left:3px;top:302px" width="9" height="9" viewBox="0 0 9 9" stroke="#bbb" stroke-width="1"><path d="M0 1 L8 9 M0 4 L5 9 M0 7 L2 9"/></svg>
<svg class="abs" style="left:350px;top:302px" width="9" height="9" viewBox="0 0 9 9" stroke="#bbb" stroke-width="1"><path d="M9 1 L1 9 M9 4 L4 9 M9 7 L7 9"/></svg>
</div></div>
<!-- bottom bar -->
<div id="bottombar" class="abs"></div>
<div class="abs" style="left:80px;top:635px;width:93px;height:40px;background:#2b2b2b;border-radius:6px"></div>
<svg class="abs" style="left:31px;top:636px" width="20" height="22" viewBox="0 0 20 22"><rect x="6.500" y="1" width="7" height="12" rx="3.500" fill="#9a9a9a"/><path d="M3.500 9.500 C3.500 18 16.500 18 16.500 9.500 M10 16 V20 M6 20.500 H14" fill="none" stroke="#9a9a9a" stroke-width="1.500"/><path d="M17.500 1.500 L2 19.500" stroke="#e0352f" stroke-width="1.600"/></svg>
<svg class="abs" style="left:66px;top:642px" width="8" height="5" viewBox="0 0 8 5"><path d="M1 4.300 L4 1.300 L7 4.300" fill="none" stroke="#bbb" stroke-width="1.300"/></svg>
<div class="t" id="b1" style="left:8.3px;top:661px;font-size:11px;color:#c9c9c9;transform-origin:0 50%;transform:scaleX(0.886)">Включить звук</div>
<svg class="abs" style="left:117px;top:640px" width="20" height="13" viewBox="0 0 20 13"><rect x="0" y="0" width="13" height="13" rx="2.500" fill="#e6e6e6"/><path d="M14 5 L19.500 1.500 V11.500 L14 8 Z" fill="#e6e6e6"/></svg>
<svg class="abs" style="left:158px;top:642px" width="8" height="5" viewBox="0 0 8 5"><path d="M1 4.300 L4 1.300 L7 4.300" fill="none" stroke="#bbb" stroke-width="1.300"/></svg>
<div class="t" id="b2" style="left:86.0px;top:661px;font-size:11px;color:#fff;font-weight:bold;transform-origin:0 50%;transform:scaleX(0.787)">Остановить видео</div>
<!-- participants -->
<svg class="abs" style="left:453px;top:640px" width="20" height="14" viewBox="0 0 20 14" fill="#c8c8c8"><circle cx="6.500" cy="3.500" r="3.300"/><path d="M0 14 C0 8 3 7.500 6.500 7.500 C10 7.500 13 8 13 14 Z"/><circle cx="14.500" cy="4.500" r="2.600"/><path d="M14 8.300 C18 8 20 9.500 20 13 H14.200 C14.200 11 14.500 9.500 13.200 8.500 Z"/></svg>
<div class="t" id="b3n" style="margin-top:1.5px;left:475.5px;top:640px;font-size:10px;color:#ddd;transform-origin:0 50%;transform:scaleX(0.966)">43</div>
<svg class="abs" style="left:499px;top:645px" width="8" height="5" viewBox="0 0 8 5"><path d="M1 4.300 L4 1.300 L7 4.300" fill="none" stroke="#bbb" stroke-width="1.300"/></svg>
<div class="t" id="b3" style="left:440.0px;top:661px;font-size:10.500px;color:#e2e2e2;transform-origin:0 50%;transform:scaleX(0.907)">Участники</div>
<svg class="abs" style="left:537px;top:640px" width="18" height="15" viewBox="0 0 18 15" fill="#b8b8b8"><path d="M2.500 0 H13.500 Q16 0 16 2.500 V8.500 Q16 11 13.500 11 H8 L4 14.500 V11 H2.500 Q0 11 0 8.500 V2.500 Q0 0 2.500 0 Z"/></svg>
<div class="abs" style="left:547px;top:635px;width:12px;height:12px;border-radius:6px;background:#e02d2d"></div><div class="t" style="left:550px;top:637px;font-size:9px;font-weight:bold;color:#fff">4</div>
<div class="t" id="b4" style="left:537.5px;top:661px;font-size:10.500px;color:#e2e2e2;transform-origin:0 50%;transform:scaleX(0.818)">Чат</div>
<svg class="abs" style="left:622px;top:640px" width="19" height="14" viewBox="0 0 19 14"><rect width="19" height="14" rx="2.500" fill="#22c64f"/><path d="M9.500 11 V4.500 M6.500 7 L9.500 3.800 L12.500 7" fill="none" stroke="#0c3a1a" stroke-width="1.500"/></svg>
<div class="t" id="b5" style="left:582.5px;top:661px;font-size:10.500px;font-weight:bold;color:#2bd45e;transform-origin:0 50%;transform:scaleX(0.852)">Демонстрация экрана</div>
<svg class="abs" style="left:709px;top:639px" width="17" height="17" viewBox="0 0 17 17"><circle cx="8.500" cy="8.500" r="7.500" fill="#555" stroke="#d8d8d8" stroke-width="1.400"/><circle cx="8.500" cy="8.500" r="4.500" fill="#bdbdbd"/></svg>
<div class="t" id="b6" style="left:702.5px;top:661px;font-size:10.500px;color:#e2e2e2;transform-origin:0 50%;transform:scaleX(0.885)">Запись</div>
<svg class="abs" style="left:772px;top:637px" width="19" height="19" viewBox="0 0 19 19"><circle cx="8.500" cy="10.500" r="7.500" fill="#c6c6c6"/><circle cx="6" cy="9" r="1" fill="#222"/><circle cx="11" cy="9" r="1" fill="#222"/><path d="M4.500 12 Q8.500 16.500 12.500 12 Z" fill="#222"/><path d="M15.500 0 V6 M12.500 3 H18.500" stroke="#ddd" stroke-width="1.300"/></svg>
<div class="t" id="b7" style="left:762.0px;top:661px;font-size:10.500px;color:#e2e2e2;transform-origin:0 50%;transform:scaleX(0.894)">Реакции</div>
<svg class="abs" style="left:840px;top:640px" width="15" height="15" viewBox="0 0 15 15" fill="none" stroke="#d0d0d0" stroke-width="1.400"><path d="M1 5.500 V3 Q1 1 3 1 H6 M14 8.500 V12 Q14 14 12 14 H9"/><circle cx="11.500" cy="3.300" r="2.300"/><circle cx="3.300" cy="11.500" r="2.300"/></svg>
<div class="t" id="b8" style="left:818.2px;top:661px;font-size:10.500px;color:#e2e2e2;transform-origin:0 50%;transform:scaleX(0.924)">Приложения</div>
<div class="abs" style="left:1143px;top:644px;width:47px;height:20px;background:#d3232c;border-radius:5px"></div>
<div class="t" id="b9" style="left:1151.9px;top:649px;font-size:10.500px;font-weight:bold;color:#fff;transform-origin:0 50%;transform:scaleX(0.829)">Выйти</div>
<!-- tooltip -->
<div class="abs" style="left:121px;top:628px;width:118px;height:15px;background:#fff;border:1px solid #9a9a9a;border-radius:2px;box-sizing:border-box"></div>
<div class="t" id="tt" style="left:125.7px;top:630px;font-size:11px;color:#444;transform-origin:0 50%;transform:scaleX(0.854)">Выключить видео (Alt+V)</div>
</body>
</html>
